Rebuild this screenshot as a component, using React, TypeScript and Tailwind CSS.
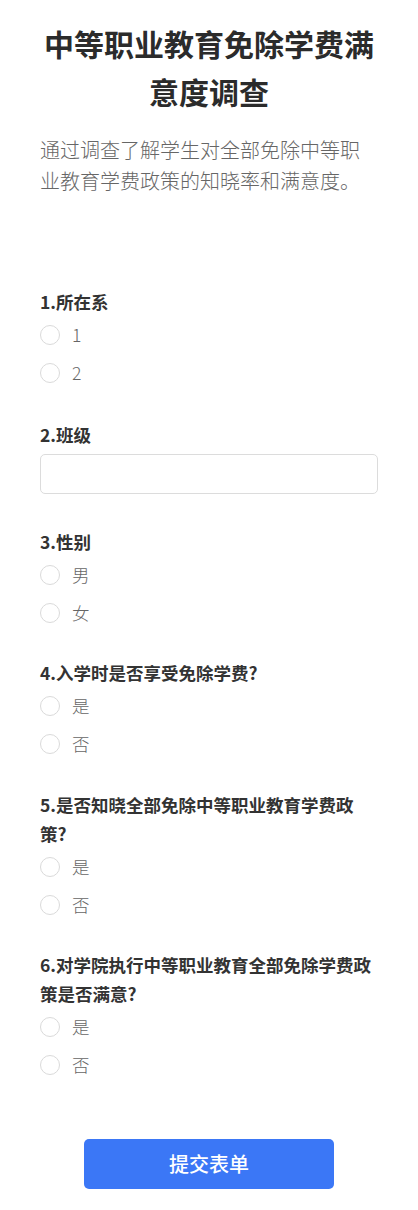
import React from "react";

type Q =
  | { kind: "radio"; label: string; options: string[]; mt: string }
  | { kind: "text"; label: string; mt: string };

const questions: Q[] = [
  { kind: "radio", label: "1.所在系", options: ["1", "2"], mt: "mt-[91px]" },
  { kind: "text", label: "2.班级", mt: "mt-[28px]" },
  { kind: "radio", label: "3.性别", options: ["男", "女"], mt: "mt-[33px]" },
  { kind: "radio", label: "4.入学时是否享受免除学费?", options: ["是", "否"], mt: "mt-[26px]" },
  { kind: "radio", label: "5.是否知晓全部免除中等职业教育学费政策?", options: ["是", "否"], mt: "mt-[27px]" },
  { kind: "radio", label: "6.对学院执行中等职业教育全部免除学费政策是否满意?", options: ["是", "否"], mt: "mt-[26px]" },
];

function Radio({ text }: { text: string }) {
  return (
    <label className="flex h-[38px] items-center">
      <span className="box-border h-5 w-5 shrink-0 rounded-full border border-[#dadada] bg-white" />
      <span className="ml-3 text-[17.5px] font-light leading-none text-[#666]">{text}</span>
    </label>
  );
}

export default function App() {
  return (
    <div
      className="min-h-[1210px] w-full bg-white px-10 pt-[19px]"
      style={{ fontFamily: '"Noto Sans CJK SC", "Noto Sans", sans-serif' }}
    >
      <h1 className="text-center text-[30px] font-bold leading-[48px] text-[#2b2b2b]">
        中等职业教育免除学费满意度调查
      </h1>
      <p className="mt-[19px] text-[20px] font-light leading-[31px] text-[#666]">
        通过调查了解学生对全部免除中等职业教育学费政策的知晓率和满意度。
      </p>

      <div className="flex flex-col">
        {questions.map((q, i) => (
          <div key={i} className={q.mt}>
            <div className="text-[17.5px] font-bold leading-[29px] text-[#333]">{q.label}</div>
            {q.kind === "radio" ? (
              <div className="flex flex-col">
                {q.options.map((o) => (
                  <Radio key={o} text={o} />
                ))}
              </div>
            ) : (
              <input
                type="text"
                className="mt-[5px] box-border block h-10 w-full rounded-[5px] border border-[#dcdcdc] bg-white px-3 text-[16px] outline-none"
              />
            )}
          </div>
        ))}
      </div>

      <div className="mt-[55px] flex justify-center pb-[21px]">
        <button
          type="button"
          className="h-[50px] w-[250px] rounded-[5px] bg-[#3b77f6] text-[20px] font-medium text-white"
        >
          提交表单
        </button>
      </div>
    </div>
  );
}
